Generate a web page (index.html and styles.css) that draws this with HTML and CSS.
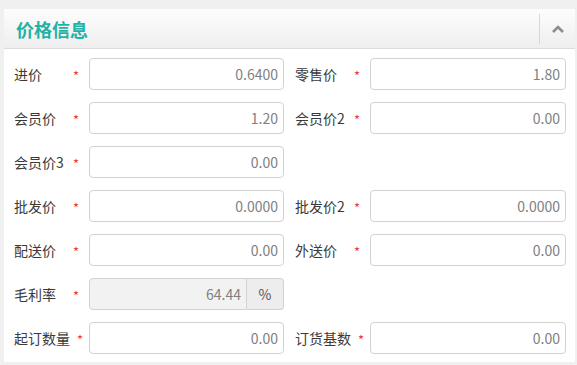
FILE: index.html
```html
<!DOCTYPE html>
<html lang="zh-CN">
<head>
    <meta charset="UTF-8">
    <title>价格信息</title>
    <link rel="stylesheet" href="styles.css">
</head>
<body>
    <div class="panel">
        <div class="panel-header">
            <h3 class="panel-title">价格信息</h3>
            <div class="panel-tool">
                <svg width="14" height="10" viewBox="0 0 14 10"><path d="M2 8 L7 3 L12 8" fill="none" stroke="#8c8c8c" stroke-width="2.6"/></svg>
            </div>
        </div>
        <div class="panel-body">
            <div class="field">
                <label><span class="name">进价</span><span class="req">*</span></label>
                <input type="text" value="0.6400">
            </div>
            <div class="field">
                <label><span class="name">零售价</span><span class="req">*</span></label>
                <input type="text" value="1.80">
            </div>
            <div class="field">
                <label><span class="name">会员价</span><span class="req">*</span></label>
                <input type="text" value="1.20">
            </div>
            <div class="field">
                <label><span class="name">会员价2</span><span class="req">*</span></label>
                <input type="text" value="0.00">
            </div>
            <div class="field">
                <label><span class="name">会员价3</span><span class="req">*</span></label>
                <input type="text" value="0.00">
            </div>
            <div class="field empty"></div>
            <div class="field">
                <label><span class="name">批发价</span><span class="req">*</span></label>
                <input type="text" value="0.0000">
            </div>
            <div class="field">
                <label><span class="name">批发价2</span><span class="req">*</span></label>
                <input type="text" value="0.0000">
            </div>
            <div class="field">
                <label><span class="name">配送价</span><span class="req">*</span></label>
                <input type="text" value="0.00">
            </div>
            <div class="field">
                <label><span class="name">外送价</span><span class="req">*</span></label>
                <input type="text" value="0.00">
            </div>
            <div class="field">
                <label><span class="name">毛利率</span><span class="req">*</span></label>
                <div class="input-group">
                    <input type="text" value="64.44" disabled>
                    <span class="addon">%</span>
                </div>
            </div>
            <div class="field empty"></div>
            <div class="field">
                <label><span class="name wide">起订数量</span><span class="req">*</span></label>
                <input type="text" value="0.00">
            </div>
            <div class="field">
                <label><span class="name wide">订货基数</span><span class="req">*</span></label>
                <input type="text" value="0.00">
            </div>
        </div>
    </div>
</body>
</html>
```

FILE: styles.css
```css
* {
    margin: 0;
    padding: 0;
    box-sizing: border-box;
}
body {
    font-family: "Noto Sans CJK SC", "Noto Sans", sans-serif;
    background-color: #f0f0f0;
    padding: 9px 2px 3px 4px;
}
.panel {
    background-color: #fff;
}
.panel-header {
    display: flex;
    align-items: center;
    height: 40px;
    background: linear-gradient(#fdfdfd, #eeeeee);
    border-bottom: 1px solid #dcdcdc;
}
.panel-title {
    flex: 1;
    padding-left: 12px;
    font-size: 18px;
    font-weight: bold;
    color: #1fb2a6;
}
.panel-tool {
    width: 36px;
    height: 30px;
    border-left: 1px solid #d8d8d8;
    display: flex;
    align-items: center;
    justify-content: center;
}
.panel-body {
    display: grid;
    grid-template-columns: 270px 271px;
    column-gap: 11px;
    row-gap: 12px;
    padding: 9px 9px 8px 10px;
}
.field {
    display: flex;
    align-items: center;
    height: 32px;
}
label {
    flex: none;
    width: 75px;
    display: flex;
    align-items: center;
    font-size: 14px;
    color: #3a3a3a;
}
.name {
    min-width: 59px;
}
.name.wide {
    margin-right: 4px;
}
.req {
    color: #f0393c;
    font-size: 13px;
    padding-top: 2px;
}
input {
    flex: 1;
    min-width: 0;
    width: 0;
    height: 32px;
    border: 1px solid #d2d2d2;
    border-radius: 4px;
    padding: 0 5px;
    text-align: right;
    font-family: inherit;
    font-size: 14px;
    color: #808080;
    background-color: #fff;
}
input:disabled {
    background-color: #f2f2f2;
    color: #808080;
}
.input-group {
    flex: 1;
    min-width: 0;
    display: flex;
    height: 32px;
}
.input-group input {
    border-radius: 4px 0 0 4px;
}
.addon {
    flex: none;
    width: 37px;
    display: flex;
    align-items: center;
    justify-content: center;
    border: 1px solid #d2d2d2;
    border-left: none;
    border-radius: 0 4px 4px 0;
    background-color: #ededed;
    font-size: 14px;
    color: #555;
}
```
